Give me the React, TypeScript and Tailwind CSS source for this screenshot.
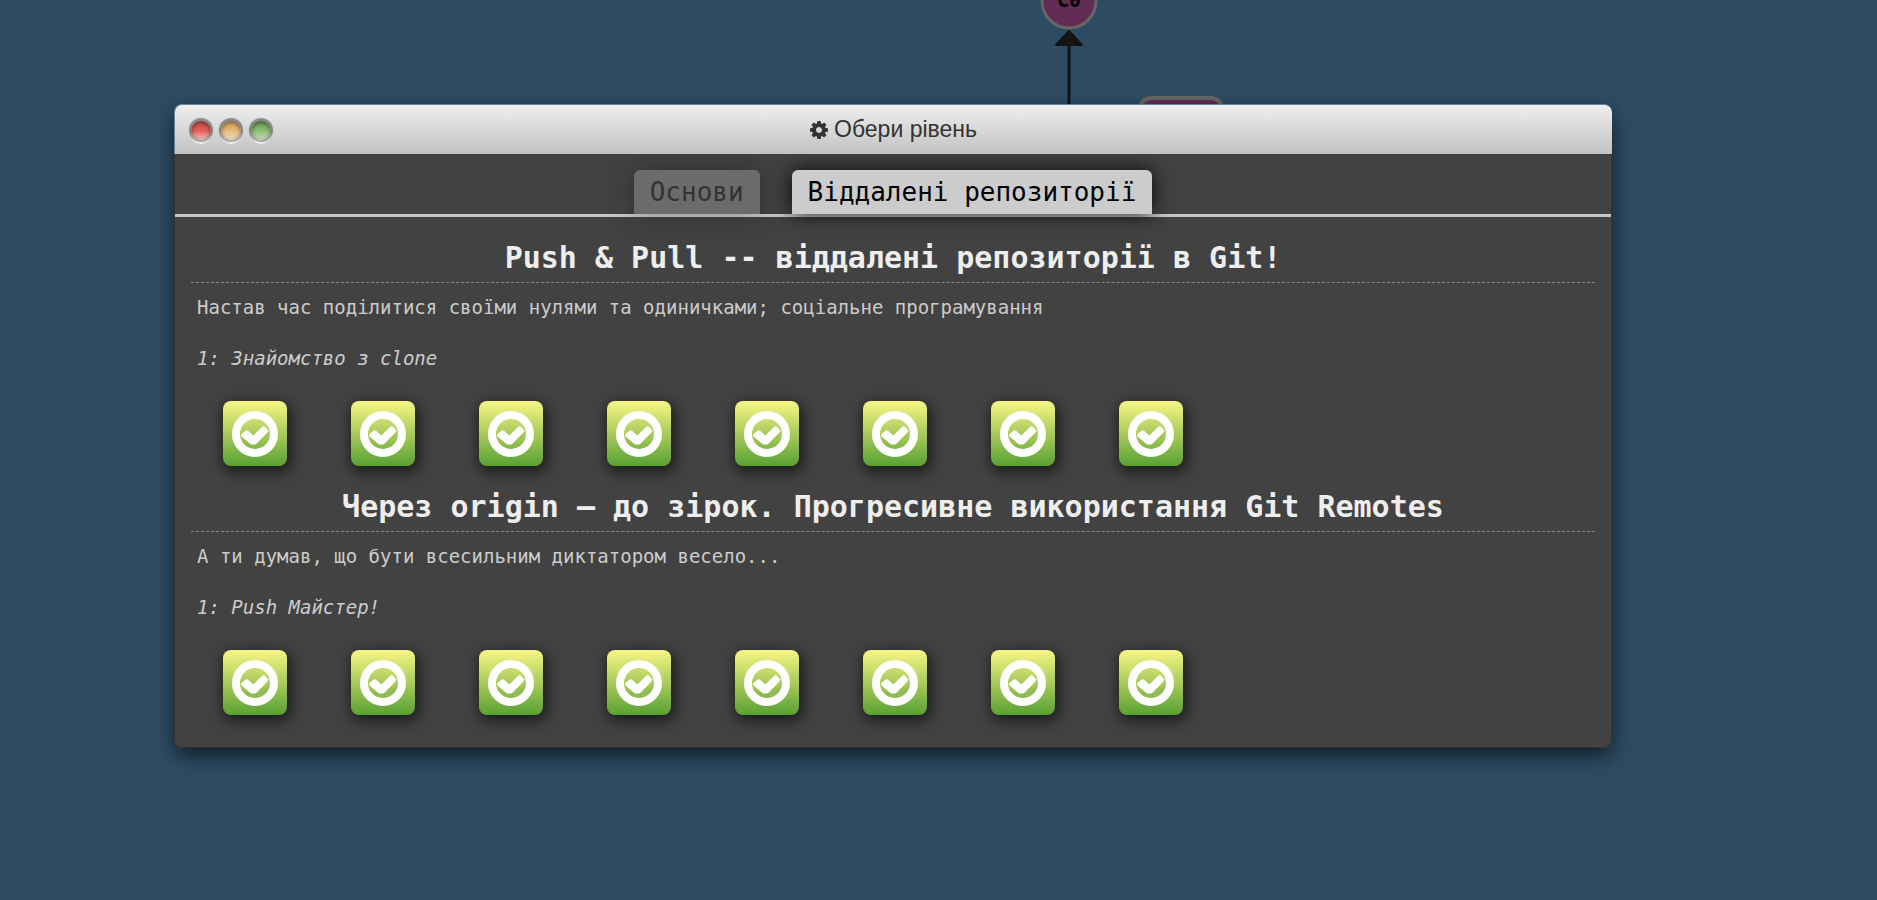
const COG =
  "M1152 896q0-106-75-181t-181-75-181 75-75 181 75 181 181 75 181-75 75-181zm512-109v222q0 12-8 23t-20 13l-185 28q-19 54-39 91 35 50 107 138 10 12 10 25t-9 23q-27 37-99 108t-94 71q-12 0-26-9l-138-108q-44 23-91 38-16 136-29 186-7 28-36 28h-222q-14 0-24.5-8.5t-11.5-21.5l-28-184q-49-16-90-37l-141 107q-10 9-25 9-14 0-25-11-126-114-165-168-7-10-7-23 0-12 8-23 15-21 51-66.5t54-70.5q-27-50-41-99l-183-27q-13-2-21-12.5t-8-23.5v-222q0-12 8-23t19-13l186-28q14-46 39-92-40-57-107-138-10-12-10-24 0-10 9-23 26-36 98.5-107.5t94.5-71.5q13 0 26 10l138 107q44-23 91-38 16-136 29-186 7-28 36-28h222q14 0 24.5 8.5t11.5 21.5l28 184q49 16 90 37l142-107q9-9 24-9 13 0 25 10 129 119 165 170 7 8 7 22 0 12-8 23-15 21-51 66.5t-54 70.5q26 50 41 98l183 28q13 2 21 12.5t8 23.5z";

const sections = [
  {
    title: "Push & Pull -- віддалені репозиторії в Git!",
    about: "Настав час поділитися своїми нулями та одиничками; соціальне програмування",
    level: "1: Знайомство з clone",
  },
  {
    title: "Через origin – до зірок. Прогресивне використання Git Remotes",
    about: "А ти думав, що бути всесильним диктатором весело...",
    level: "1: Push Майстер!",
  },
];

const lights = [
  { label: "Закрити", color: "bg-linear-to-b from-[#c04a46] via-[#e2605b] to-[#e0cccb]" },
  { label: "Згорнути", color: "bg-linear-to-b from-[#c79a58] via-[#ecbd7a] to-[#e6dccd]" },
  { label: "Розгорнути", color: "bg-linear-to-b from-[#67954f] via-[#8dbf72] to-[#cfdcc8]" },
];

function Tree() {
  return (
    <svg className="absolute top-0 left-1/2 -z-10 ml-[99px]" width="200" height="120" viewBox="0 0 200 120" aria-hidden="true">
      <path d="M31 40V120" stroke="#141414" strokeWidth="3" />
      <path d="M31 31L44 45H18Z" fill="#141414" stroke="#141414" strokeWidth="2" strokeLinejoin="round" />
      <circle cx="31" cy="1" r="27" fill="#632c54" stroke="#666" strokeWidth="3" />
      <text x="31" y="7" textAnchor="middle" fontSize="20" fontWeight="bold" fontFamily="DejaVu Sans Mono, monospace">
        C0
      </text>
      <rect x="102" y="98" width="82" height="40" rx="11" fill="#632c54" stroke="#666" strokeWidth="4" />
    </svg>
  );
}

function LevelButton({ label }: { label: string }) {
  return (
    <button
      type="button"
      aria-label={label}
      className="flex h-[65px] w-16 items-center justify-center rounded-lg bg-linear-to-b from-[#f8f684] to-[#58a033] shadow-[2px_4px_14px_2px_rgba(0,0,0,0.6)]"
    >
      <svg width="46" height="46" viewBox="0 0 46 46" aria-hidden="true">
        <circle cx="23" cy="23" r="19" fill="none" stroke="#fff" strokeWidth="8" />
        <path
          d="M9.500 23L13.600 19.600Q15 18.800 16.400 20L21.300 24.500L30.500 15.600Q31.700 14.700 32.900 15.800L35.800 18.700Q36.800 20 35.700 21.300L24.700 32.600Q23.800 33.500 22.500 33.500H20Q18.800 33.500 17.800 32.600L9.500 25.400Q8.400 24.200 9.500 23Z"
          fill="#fff"
        />
      </svg>
    </button>
  );
}

export default function App() {
  return (
    <div className="relative isolate min-h-screen overflow-hidden bg-[#2d4c63] pt-[104px] pr-[265px] pb-10 pl-[174px] font-['DejaVu_Sans_Mono',monospace]">
      <Tree />
      <main className="rounded-lg shadow-[0_8px_20px_rgba(0,0,0,0.6)]">
        <header className="relative flex h-[50px] items-center justify-center rounded-t-lg border-t border-l border-[#6586a5] bg-linear-to-b from-[#efefef] to-[#c2c2c2]">
          <div className="absolute top-4 left-4 flex gap-[10px]">
            {lights.map((l) => (
              <button
                key={l.label}
                type="button"
                aria-label={l.label}
                className={`size-5 rounded-full shadow-[0_-1px_1px_2px_rgba(0,0,0,0.4),0_3px_0_0_#f4f4f4,inset_0_1px_4px_rgba(0,0,0,0.5)] ${l.color}`}
              />
            ))}
          </div>
          <h1 className="flex items-center gap-[6px] font-['Liberation_Sans',sans-serif] text-[23px] text-[#333]">
            <svg width="18" height="18" viewBox="128 128 1536 1536" fill="currentColor" aria-hidden="true">
              <path d={COG} />
            </svg>
            Обери рівень
          </h1>
        </header>
        <div className="rounded-b-lg border border-t-0 border-[#333] bg-[#424242] pb-4">
          <nav className="flex justify-center gap-8 border-b-3 border-[#c6c8c7] pt-4">
            <button type="button" className="h-11 rounded-t-md bg-[#6b6b6b] px-4 text-[26px] leading-11 text-[#333] shadow-[0_0_30px_rgba(0,0,0,0.3)]">
              Основи
            </button>
            <button type="button" className="h-11 rounded-t-md bg-[#ccc] px-4 text-[26px] leading-11 text-black shadow-[0_0_20px_rgba(0,0,0,0.9)]">
              Віддалені репозиторії
            </button>
          </nav>
          <div className="flex flex-col px-4 pt-4">
            {sections.map((s) => (
              <section key={s.title} className="h-[249px]">
                <h2 className="h-[50px] border-b border-dashed border-[#888] text-center text-[30px] leading-[50px] font-bold text-[#eee]">
                  {s.title}
                </h2>
                <p className="mt-3 px-[6px] text-[19px] leading-6 text-[#ccc]">{s.about}</p>
                <h3 className="mt-[27px] px-[6px] text-[19px] leading-6 text-[#ccc] italic">{s.level}</h3>
                <div className="mt-[31px] flex gap-16 px-8">
                  {Array.from({ length: 8 }, (_, i) => (
                    <LevelButton key={i} label={`Рівень ${i + 1}`} />
                  ))}
                </div>
              </section>
            ))}
          </div>
        </div>
      </main>
    </div>
  );
}
